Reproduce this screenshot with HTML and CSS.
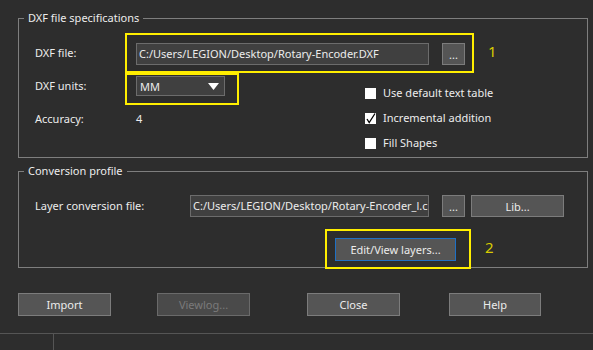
FILE: index.html
```html
<!DOCTYPE html>
<html lang="en">
<head>
    <meta charset="UTF-8">
    <title>DXF Import</title>
    <link rel="stylesheet" href="styles.css">
</head>
<body>
    <div class="dialog">

        <!-- DXF file specifications -->
        <div class="group group-spec">
            <span class="group-title">DXF file specifications</span>

            <div class="row">
                <span class="label">DXF file:</span>
                <div class="mark mark-file">
                    <div class="field field-file">C:/Users/LEGION/Desktop/Rotary-Encoder.DXF</div>
                    <button class="btn btn-dots">...</button>
                </div>
                <span class="mark-num">1</span>
            </div>

            <div class="row row-lower">
                <div class="col-left">
                    <div class="row">
                        <span class="label label-units">DXF units:</span>
                        <div class="mark mark-units">
                            <div class="select">
                                <span>MM</span>
                                <svg class="arrow" width="11" height="7" viewBox="0 0 11 7"><polygon points="0,0 11,0 5.5,7" fill="#ffffff"/></svg>
                            </div>
                        </div>
                    </div>
                    <div class="row row-acc">
                        <span class="label">Accuracy:</span>
                        <span class="value">4</span>
                    </div>
                </div>

                <div class="col-checks">
                    <div class="check">
                        <svg class="box" width="11" height="11" viewBox="0 0 11 11"><rect width="11" height="11" fill="#ffffff"/></svg>
                        <span>Use default text table</span>
                    </div>
                    <div class="check">
                        <svg class="box" width="11" height="11" viewBox="0 0 11 11"><rect width="11" height="11" fill="#ffffff"/><polyline points="2,6 4.2,9.5 10,0.5" fill="none" stroke="#000000" stroke-width="1.3"/></svg>
                        <span>Incremental addition</span>
                    </div>
                    <div class="check">
                        <svg class="box" width="11" height="11" viewBox="0 0 11 11"><rect width="11" height="11" fill="#ffffff"/></svg>
                        <span>Fill Shapes</span>
                    </div>
                </div>
            </div>
        </div>

        <!-- Conversion profile -->
        <div class="group group-profile">
            <span class="group-title">Conversion profile</span>

            <div class="row">
                <span class="label label-layer">Layer conversion file:</span>
                <div class="field field-layer">C:/Users/LEGION/Desktop/Rotary-Encoder_l.cr</div>
                <button class="btn btn-dots">...</button>
                <button class="btn btn-lib">Lib...</button>
            </div>

            <div class="row row-edit">
                <div class="mark mark-edit">
                    <button class="btn btn-edit">Edit/View layers...</button>
                </div>
                <span class="mark-num">2</span>
            </div>
        </div>

        <!-- Dialog buttons -->
        <div class="actions">
            <button class="btn btn-action">Import</button>
            <button class="btn btn-action btn-disabled btn-viewlog">Viewlog...</button>
            <button class="btn btn-action btn-close">Close</button>
            <button class="btn btn-action btn-help">Help</button>
        </div>
    </div>

    <div class="status-bar">
        <div class="status-cell"></div>
    </div>
</body>
</html>
```

FILE: styles.css
```css
body {
    margin: 0;
    background-color: #2d2d2d;
    color: #ececec;
    font-family: "Noto Sans", sans-serif;
    font-size: 11px;
    line-height: 16px;
    width: 593px;
    height: 350px;
    overflow: hidden;
}

.dialog {
    padding: 18px 0 0 18px;
}

.group {
    position: relative;
    box-sizing: border-box;
    width: 570px;
    border: 1px solid #7e7e7e;
    padding-left: 16px;
}

.group-title {
    position: absolute;
    top: -9px;
    left: 5px;
    padding: 0 4px;
    background-color: #2d2d2d;
}

.group-spec {
    height: 140px;
    padding-top: 14px;
}

.group-profile {
    height: 97px;
    margin-top: 13px;
    padding-top: 23px;
}

.row {
    display: flex;
    align-items: center;
}

.label {
    width: 90px;
    flex-shrink: 0;
}

.label-units {
    align-self: flex-start;
    margin-top: 3px;
    line-height: 20px;
}

.label-layer {
    width: 155px;
}

/* yellow annotation frames */
.mark {
    display: flex;
    box-sizing: border-box;
    border: 2px solid #ffee00;
}

.mark-file {
    width: 349px;
    height: 40px;
    padding: 8px 0 0 9px;
    align-items: flex-start;
}

.mark-units {
    width: 114px;
    height: 32px;
    padding: 1px 0 0 9px;
    align-items: flex-start;
}

.mark-edit {
    width: 146px;
    height: 40px;
    padding: 7px 0 0 8px;
    align-items: flex-start;
}

.mark-num {
    color: #d8cc00;
    font-size: 15px;
    margin-left: 14px;
    margin-top: -5px;
}

.field {
    box-sizing: border-box;
    height: 22px;
    border: 1px solid #6c6c6c;
    background-color: #404040;
    padding: 2px 0 0 2px;
    white-space: nowrap;
    overflow: hidden;
    flex-shrink: 0;
}

.field-file {
    width: 293px;
}

.field-layer {
    width: 239px;
}

.select {
    box-sizing: border-box;
    width: 89px;
    height: 20px;
    border: 1px solid #6c6c6c;
    background-color: #404040;
    padding: 1px 5px 0 3px;
    display: flex;
    justify-content: space-between;
    align-items: center;
}

.btn {
    box-sizing: border-box;
    height: 22px;
    border: 1px solid #7c7c7c;
    background-color: #555555;
    color: #ececec;
    font-family: inherit;
    font-size: 11px;
    padding: 0;
    flex-shrink: 0;
}

.btn-dots {
    width: 23px;
    margin-left: 13px;
}

.btn-lib {
    width: 93px;
    margin-left: 6px;
}

.row-lower {
    align-items: flex-start;
}

.col-left {
    width: 204px;
}

.row-acc {
    margin-top: 6px;
}

.value {
    margin-left: 11px;
}

.col-checks {
    margin-left: 126px;
    margin-top: 10px;
    display: flex;
    flex-direction: column;
    gap: 5px;
}

.check {
    display: flex;
    align-items: center;
    height: 20px;
}

.check .box {
    margin-right: 7px;
}

.row-edit {
    margin-top: 12px;
    margin-left: 290px;
}

.btn-edit {
    width: 121px;
    height: 23px;
    border-color: #1f70c4;
}

.actions {
    display: flex;
    margin-top: 25px;
}

.btn-action {
    width: 93px;
    height: 23px;
}

.btn-disabled {
    color: #7a7a7a;
    background-color: #4a4a4a;
    border-color: #6a6a6a;
}

.btn-viewlog {
    margin-left: 46px;
}

.btn-close {
    margin-left: 57px;
}

.btn-help {
    margin-left: 49px;
    width: 92px;
}

.status-bar {
    margin-top: 17px;
    border-top: 1px solid #555555;
    height: 17px;
}

.status-cell {
    width: 53px;
    height: 100%;
    border-right: 1px solid #555555;
}
```
